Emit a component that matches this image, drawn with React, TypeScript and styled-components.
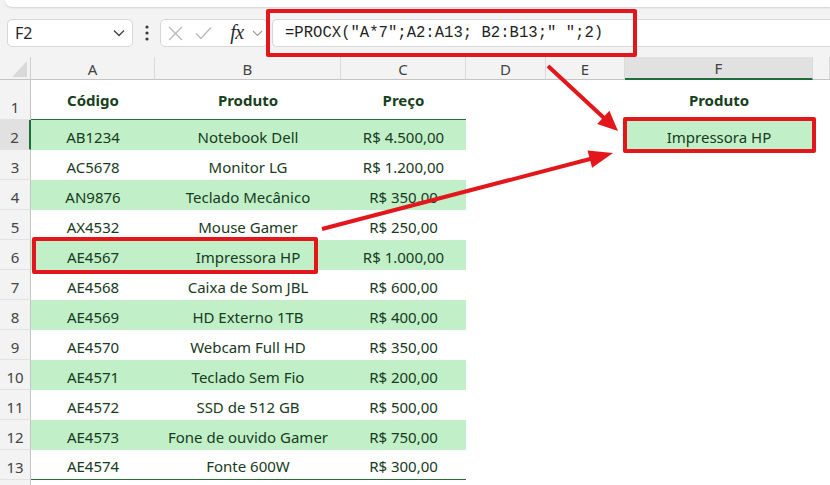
import React from 'react';
import styled, { createGlobalStyle } from 'styled-components';

const Global = createGlobalStyle`
  html, body { margin: 0; padding: 0; background: #f3f3f3; }
  body { font-family: "Noto Sans", "Liberation Sans", sans-serif; }
  #root { width: 830px; height: 485px; }
`;

const GREEN_TEXT = '#173a21';
const HEAD_TEXT = '#173f20';
const STRIPE = '#c1f0c8';
const TABLE_LINE = '#2d6a3a';
const SEL_GREEN = '#1e6e3b';
const RED = '#e3161b';

const Frame = styled.div`
  position: relative;
  width: 830px;
  height: 485px;
  overflow: hidden;
  background: #f3f3f3;
  display: flex;
  flex-direction: column;
`;

const RibbonEdge = styled.div`
  flex: none;
  height: 7px;
  margin-left: 5px;
  background: #ffffff;
  border-radius: 0 0 0 8px;
  box-shadow: 0 1px 2px rgba(0, 0, 0, 0.14);
`;

const FormulaBar = styled.div`
  flex: none;
  height: 50px;
  box-sizing: border-box;
  padding: 2px 0 0 7px;
  display: flex;
  align-items: center;
`;

const Box = styled.div`
  box-sizing: border-box;
  height: 28px;
  background: #ffffff;
  border: 1px solid #d6d6d6;
  border-radius: 5px;
  display: flex;
  align-items: center;
`;

const NameBox = styled(Box)`
  width: 126px;
  padding: 0 7px 0 7px;
  justify-content: space-between;
  font-size: 16px;
  color: #262626;
`;

const Dots = styled.div`
  width: 27px;
  display: flex;
  justify-content: center;
`;

const FxBox = styled(Box)`
  width: 108px;
  padding-left: 7px;
`;

const IconSlot = styled.span<{ $ml: number; $w: number }>`
  display: flex;
  align-items: center;
  justify-content: center;
  width: ${(p) => p.$w}px;
  margin-left: ${(p) => p.$ml}px;
`;

const FxLabel = styled.span`
  font-family: "Liberation Serif", "DejaVu Serif", serif;
  font-style: italic;
  font-size: 20px;
  color: #2b2b2b;
  letter-spacing: -0.5px;
  line-height: 1;
  margin-top: -3px;
`;

const FormulaInput = styled(Box)`
  flex: 1;
  margin-left: 4px;
  padding-left: 12px;
  border-right: none;
  border-radius: 5px 0 0 5px;
  font-family: "Liberation Mono", "DejaVu Sans Mono", monospace;
  font-size: 15.6px;
  color: #1f1f1f;
  white-space: pre;
`;

const Sheet = styled.div`
  flex: none;
  display: grid;
  grid-template-columns: 31px 124px 186px 125px 80px 79px 188px 1fr;
  grid-template-rows: 23px 40px repeat(13, 30px);
  background: #ffffff;
`;

const Corner = styled.div`
  background: #f3f3f3;
  border-right: 1px solid #cfcfcf;
  border-bottom: 1px solid #c4c4c4;
  display: flex;
  align-items: flex-end;
  justify-content: flex-end;
  padding: 0 3px 2px 0;
  box-sizing: border-box;
`;

const Triangle = styled.div`
  width: 0;
  height: 0;
  border-left: 15px solid transparent;
  border-bottom: 16px solid #d9d9d9;
`;

const ColHead = styled.div<{ $active?: boolean }>`
  box-sizing: border-box;
  background: ${(p) => (p.$active ? '#e1e1e1' : '#f3f3f3')};
  border-right: 1px solid #dadada;
  border-bottom: ${(p) => (p.$active ? `2px solid ${SEL_GREEN}` : '1px solid #c4c4c4')};
  display: flex;
  align-items: center;
  justify-content: center;
  padding-top: 1px;
  font-size: 15px;
  color: #424242;
`;

const RowHead = styled.div<{ $active?: boolean }>`
  box-sizing: border-box;
  background: ${(p) => (p.$active ? '#e1e1e1' : '#f3f3f3')};
  border-right: ${(p) => (p.$active ? `2px solid ${SEL_GREEN}` : '1px solid #c4c4c4')};
  border-bottom: 1px solid #e2e2e2;
  display: flex;
  align-items: flex-end;
  justify-content: center;
  padding-bottom: 2px;
  font-size: 15px;
  line-height: 20px;
  color: #444444;
`;

const Cell = styled.div<{ $fill?: boolean; $head?: boolean; $lineBottom?: boolean }>`
  box-sizing: border-box;
  background: ${(p) => (p.$fill ? STRIPE : '#ffffff')};
  border-bottom: ${(p) => (p.$lineBottom ? `1px solid ${TABLE_LINE}` : 'none')};
  display: flex;
  align-items: ${(p) => (p.$head ? 'center' : 'flex-end')};
  justify-content: center;
  padding-bottom: ${(p) => (p.$head ? 0 : 3)}px;
  font-size: 15px;
  line-height: 20px;
  font-weight: ${(p) => (p.$head ? 700 : 400)};
  color: ${(p) => (p.$head ? HEAD_TEXT : GREEN_TEXT)};
  white-space: nowrap;
`;

const Highlight = styled.div<{ $x: number; $y: number; $w: number; $h: number }>`
  position: absolute;
  left: ${(p) => p.$x}px;
  top: ${(p) => p.$y}px;
  width: ${(p) => p.$w}px;
  height: ${(p) => p.$h}px;
  box-sizing: border-box;
  border: 4px solid ${RED};
  border-radius: 2px;
  pointer-events: none;
`;

const ArrowLayer = styled.svg`
  position: absolute;
  left: 0;
  top: 0;
  width: 830px;
  height: 485px;
  pointer-events: none;
`;

const rows: [string, string, string][] = [
  ['AB1234', 'Notebook Dell', 'R$ 4.500,00'],
  ['AC5678', 'Monitor LG', 'R$ 1.200,00'],
  ['AN9876', 'Teclado Mecânico', 'R$ 350,00'],
  ['AX4532', 'Mouse Gamer', 'R$ 250,00'],
  ['AE4567', 'Impressora HP', 'R$ 1.000,00'],
  ['AE4568', 'Caixa de Som JBL', 'R$ 600,00'],
  ['AE4569', 'HD Externo 1TB', 'R$ 400,00'],
  ['AE4570', 'Webcam Full HD', 'R$ 350,00'],
  ['AE4571', 'Teclado Sem Fio', 'R$ 200,00'],
  ['AE4572', 'SSD de 512 GB', 'R$ 500,00'],
  ['AE4573', 'Fone de ouvido Gamer', 'R$ 750,00'],
  ['AE4574', 'Fonte 600W', 'R$ 300,00'],
];

const cols = ['A', 'B', 'C', 'D', 'E', 'F', ''];

const Chevron = ({ color = '#555' }: { color?: string }) => (
  <svg width="12" height="8" viewBox="0 0 12 8">
    <path d="M1 1.5 L6 6.5 L11 1.5" fill="none" stroke={color} strokeWidth="1.4" />
  </svg>
);

export default function App() {
  return (
    <>
      <Global />
      <Frame>
        <RibbonEdge />
        <FormulaBar>
          <NameBox>
            <span>F2</span>
            <Chevron color="#444" />
          </NameBox>
          <Dots>
            <svg width="4" height="16" viewBox="0 0 4 16">
              <circle cx="2" cy="2" r="1.6" fill="#3a3a3a" />
              <circle cx="2" cy="8" r="1.6" fill="#3a3a3a" />
              <circle cx="2" cy="14" r="1.6" fill="#3a3a3a" />
            </svg>
          </Dots>
          <FxBox>
            <IconSlot $ml={0} $w={15}>
              <svg width="15" height="15" viewBox="0 0 15 15">
                <path d="M1 1 L14 14 M14 1 L1 14" stroke="#b9b9b9" strokeWidth="1.3" fill="none" />
              </svg>
            </IconSlot>
            <IconSlot $ml={12} $w={17}>
              <svg width="17" height="14" viewBox="0 0 17 14">
                <path d="M1 7.5 L6 12.5 L16 1.5" stroke="#b9b9b9" strokeWidth="1.3" fill="none" />
              </svg>
            </IconSlot>
            <IconSlot $ml={17} $w={16}>
              <FxLabel>fx</FxLabel>
            </IconSlot>
            <IconSlot $ml={7} $w={11}>
              <svg width="11" height="7" viewBox="0 0 11 7">
                <path d="M1 1 L5.5 5.5 L10 1" fill="none" stroke="#9a9a9a" strokeWidth="1.2" />
              </svg>
            </IconSlot>
          </FxBox>
          <FormulaInput>{'=PROCX("A*7";A2:A13; B2:B13;" ";2)'}</FormulaInput>
        </FormulaBar>
        <Sheet>
          <Corner>
            <Triangle />
          </Corner>
          {cols.map((c, i) => (
            <ColHead key={'h' + i} $active={c === 'F'}>
              {c}
            </ColHead>
          ))}

          <RowHead>1</RowHead>
          <Cell $head $lineBottom>Código</Cell>
          <Cell $head $lineBottom>Produto</Cell>
          <Cell $head $lineBottom>Preço</Cell>
          <Cell />
          <Cell />
          <Cell $head>Produto</Cell>
          <Cell />

          {rows.map((r, i) => {
            const n = i + 2;
            const fill = i % 2 === 0;
            const last = i === rows.length - 1;
            return (
              <React.Fragment key={n}>
                <RowHead $active={n === 2}>{n}</RowHead>
                <Cell $fill={fill} $lineBottom={last}>{r[0]}</Cell>
                <Cell $fill={fill} $lineBottom={last}>{r[1]}</Cell>
                <Cell $fill={fill} $lineBottom={last}>{r[2]}</Cell>
                <Cell />
                <Cell />
                {n === 2 ? <Cell $fill>Impressora HP</Cell> : <Cell />}
                <Cell />
              </React.Fragment>
            );
          })}

          <RowHead />
          <Cell />
          <Cell />
          <Cell />
          <Cell />
          <Cell />
          <Cell />
          <Cell />
        </Sheet>

        <Highlight $x={266} $y={9} $w={371} $h={48} />
        <Highlight $x={32} $y={237} $w={286} $h={37} />
        <Highlight $x={623} $y={117} $w={193} $h={36} />

        <ArrowLayer viewBox="0 0 830 485">
          <line x1="548" y1="66" x2="604" y2="118" stroke={RED} strokeWidth="4" />
          <polygon points="618,131 597.2,124 609.4,110.8" fill={RED} />
          <line x1="322" y1="229" x2="591" y2="158.8" stroke={RED} strokeWidth="4" />
          <polygon points="613,153 592.1,167.8 587.5,150.4" fill={RED} />
        </ArrowLayer>
      </Frame>
    </>
  );
}
